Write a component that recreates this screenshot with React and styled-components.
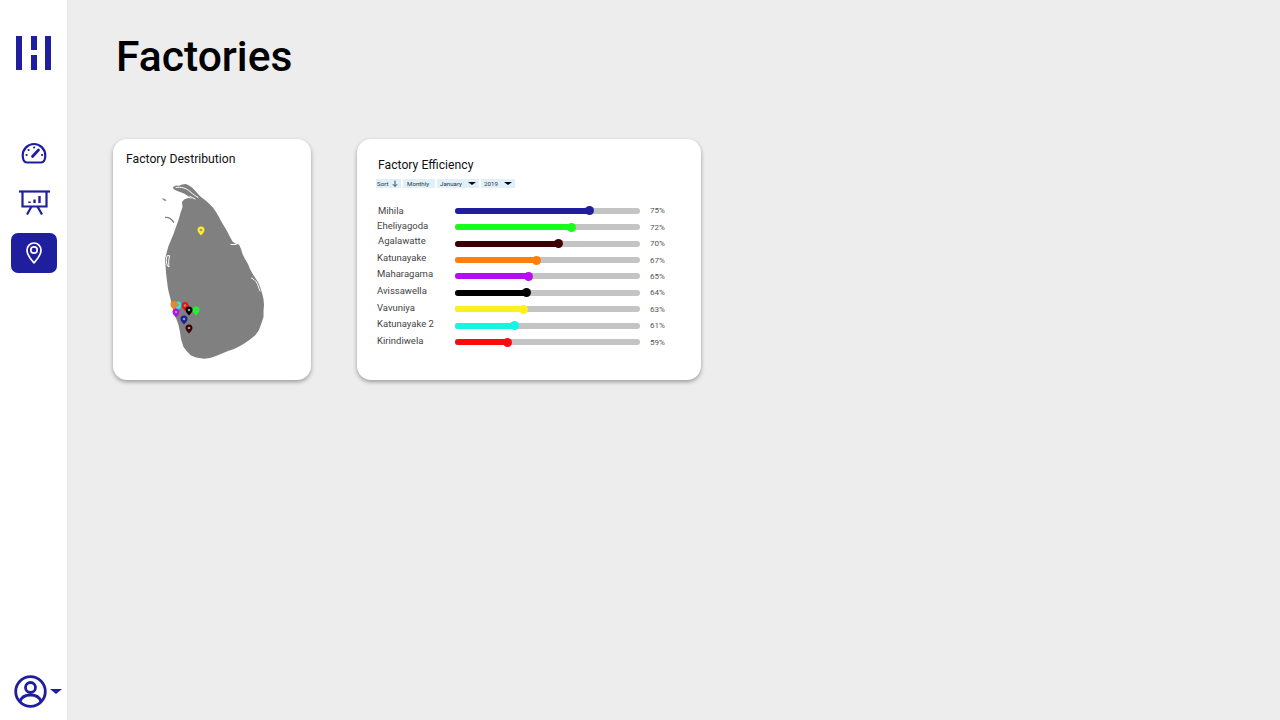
import React from "react";
import styled, { createGlobalStyle } from "styled-components";

const BLUE = "#1e1e9e";

const GlobalStyle = createGlobalStyle`
    html, body {
        margin: 0;
        height: 100%;
        background: #ededed;
        font-family: "Roboto", "Liberation Sans", sans-serif;
    }
`;

const Page = styled.div`
    display: flex;
    width: 1280px;
    height: 720px;
    overflow: hidden;
    background: #ededed;
`;

const Sidebar = styled.aside`
    width: 67px;
    height: 720px;
    flex-shrink: 0;
    display: flex;
    flex-direction: column;
    align-items: center;
    background: #fff;
    box-shadow: 1px 0 1px rgba(0, 0, 0, 0.02);
`;

const Logo = styled.div`
    width: 35px;
    height: 34px;
    margin-top: 36px;
    display: flex;
    justify-content: space-between;
`;

const LogoBar = styled.span`
    width: 6px;
    height: 100%;
    background: ${BLUE};
`;

const LogoSplitBar = styled.span`
    width: 6px;
    height: 100%;
    background: linear-gradient(${BLUE} 14px, transparent 14px, transparent 19px, ${BLUE} 19px);
`;

const Nav = styled.nav`
    margin-top: 72px;
    display: flex;
    flex-direction: column;
    align-items: center;
    width: 100%;
`;

const NavItem = styled.div`
    width: 46px;
    height: ${(p) => p.$height}px;
    margin-left: 1px;
    display: flex;
    align-items: center;
    justify-content: center;
    border-radius: 7px;
    color: ${(p) => (p.$active ? "#fff" : BLUE)};
    background: ${(p) => (p.$active ? BLUE : "transparent")};
`;

const NavGap = styled.div`
    height: ${(p) => p.$size}px;
`;

const UserMenu = styled.div`
    margin-top: auto;
    margin-bottom: 12px;
    margin-left: 9px;
    display: flex;
    align-items: center;
    gap: 3px;
    color: ${BLUE};
`;

const Caret = styled.span`
    width: 0;
    height: 0;
    border-left: ${(p) => p.$size}px solid transparent;
    border-right: ${(p) => p.$size}px solid transparent;
    border-top: ${(p) => p.$size - 1}px solid ${(p) => p.$color};
`;

const Main = styled.main`
    flex: 1;
    padding-left: 46px;
`;

const Title = styled.h1`
    margin: 33px 0 0 3px;
    height: 47px;
    font-size: 42.6px;
    line-height: 47px;
    font-weight: 500;
    color: #000;
`;

const Cards = styled.div`
    margin-top: 59px;
    display: flex;
    gap: 46px;
`;

const Card = styled.section`
    box-sizing: border-box;
    height: 241px;
    background: #fff;
    border-radius: 14px;
    box-shadow: 0 2px 4px rgba(0, 0, 0, 0.35);
`;

const MapCard = styled(Card)`
    width: 198px;
    padding: 13px 13px 0;
`;

const MapHolder = styled.div`
    margin: 14px 0 0 34px;
`;

const EfficiencyCard = styled(Card)`
    width: 344px;
    padding: 19px 21px 0;
`;

const CardTitle = styled.h2`
    margin: 0;
    font-size: 12.2px;
    line-height: 15px;
    font-weight: 400;
    color: #111;
`;

const Filters = styled.div`
    margin: 6px 0 0 -2px;
    display: flex;
    gap: 2px;
`;

const Chip = styled.div`
    box-sizing: border-box;
    width: ${(p) => p.$width}px;
    height: 9px;
    padding: 0 3px 0 ${(p) => p.$pad}px;
    display: flex;
    align-items: center;
    justify-content: space-between;
    background: #dff0fb;
    font-size: 6.2px;
    color: #333;
    white-space: nowrap;
`;

const SortArrow = styled.svg`
    width: 6px;
    height: 7px;
    color: #222;
`;

const Rows = styled.div`
    margin: 14.5px 0 0 -1px;
    display: flex;
    flex-direction: column;
`;

const Row = styled.div`
    height: 16.45px;
    display: flex;
    align-items: center;
`;

const RowLabel = styled.div`
    width: ${(p) => 78 - p.$indent}px;
    padding-left: ${(p) => p.$indent}px;
    padding-bottom: ${(p) => p.$lift}px;
    font-size: 9.5px;
    line-height: 11px;
    color: #444;
    white-space: nowrap;
`;

const Track = styled.div`
    position: relative;
    width: 185px;
    height: 6px;
    border-radius: 3px;
    background: #c4c4c4;
`;

const Fill = styled.div`
    position: relative;
    height: 100%;
    border-radius: 3px;
    background: ${(p) => p.$color};

    &::after {
        content: "";
        position: absolute;
        right: -4.500px;
        top: -1.500px;
        width: 9px;
        height: 9px;
        border-radius: 50%;
        background: ${(p) => p.$color};
    }
`;

const Percent = styled.div`
    margin-left: 10px;
    font-size: 8px;
    color: #555;
`;

const factories = [
    { name: "Mihila", value: 75, width: 134.3, color: BLUE, indent: 1, lift: 0 },
    { name: "Eheliyagoda", value: 72, width: 116.3, color: "#14ff1f", indent: 0, lift: 4 },
    { name: "Agalawatte", value: 70, width: 103.8, color: "#3c0000", indent: 1, lift: 6 },
    { name: "Katunayake", value: 67, width: 81.3, color: "#ff7f0e", indent: 0, lift: 5 },
    { name: "Maharagama", value: 65, width: 73, color: "#b50df0", indent: 0, lift: 5 },
    { name: "Avissawella", value: 64, width: 71.3, color: "#000", indent: 0, lift: 4 },
    { name: "Vavuniya", value: 63, width: 68.8, color: "#ffee22", indent: 0, lift: 4 },
    { name: "Katunayake 2", value: 61, width: 59.8, color: "#14f5e6", indent: 0, lift: 4 },
    { name: "Kirindiwela", value: 59, width: 52.3, color: "#f80d0d", indent: 0, lift: 4 },
];

const pins = [
    { x: 201, y: 230, color: "#ffee22" },
    { x: 178, y: 305, color: "#14f5e6" },
    { x: 174, y: 304.5, color: "#ff7f0e" },
    { x: 185, y: 305.5, color: "#f80d0d" },
    { x: 196, y: 310, color: "#14ff1f" },
    { x: 189, y: 310, color: "#000" },
    { x: 176, y: 312, color: "#b50df0" },
    { x: 184, y: 319, color: BLUE },
    { x: 189, y: 328, color: "#3c0000" },
];

function GaugeIcon() {
    return (
        <svg width="26" height="22" viewBox="0 0 26 22" fill="none" stroke="currentColor" strokeWidth="2.200" strokeLinecap="round">
            <path d="M6 20.500h14c1.800 0 2.800-.8 3.400-2.300.5-1.400.9-3 .9-4.700C24.300 7.200 19.200 2 13 2S1.700 7.200 1.700 13.500c0 1.700.4 3.300.9 4.700.6 1.500 1.600 2.300 3.400 2.300z" />
            <path d="M11.500 14.500l6-6.500" strokeWidth="2.800" />
            <path d="M5.500 13h.2M7.500 8h.2M13 5.500h.2M21 13h.2" strokeWidth="2" />
        </svg>
    );
}

function BoardIcon() {
    return (
        <svg width="31" height="25" viewBox="0 0 31 25" fill="none" stroke="currentColor" strokeWidth="2.200">
            <path d="M0 1.500h31" />
            <path d="M3.500 1.500v15h24v-15" />
            <path d="M12.500 16.500l-4.500 8M18.500 16.500l4.500 8" />
            <path d="M10.500 13v-1.500M15.500 13v-3.500M20.500 13V6" strokeWidth="2.400" />
        </svg>
    );
}

function PinIcon() {
    return (
        <svg width="16" height="22" viewBox="0 0 16 22" fill="none" stroke="currentColor" strokeWidth="1.700">
            <path d="M8 20.800C5.800 18.400 1 13.600 1 8.200 1 4.200 4.100 1 8 1s7 3.200 7 7.200c0 5.400-4.800 10.200-7 12.600z" />
            <circle cx="8" cy="8" r="3.200" />
        </svg>
    );
}

function UserIcon() {
    return (
        <svg width="33" height="33" viewBox="0 0 33 33" fill="none" stroke="currentColor" strokeWidth="2.800">
            <circle cx="16.500" cy="16.500" r="14.800" />
            <circle cx="16.500" cy="12.500" r="5" />
            <path d="M6 26.500c1.500-4.500 5.500-6.500 10.500-6.500s9 2 10.500 6.500" />
        </svg>
    );
}

function MapPin({ x, y, color }) {
    return (
        <g transform={`translate(${x} ${y})`}>
            <path d="M0 4.500C-1.300 3-3.500 1-3.500 -1a3.500 3.500 0 0 1 7 0c0 2-2.200 4-3.500 5.500z" fill={color} />
            <circle cx="0" cy="-1" r="1.300" fill="#999" />
        </g>
    );
}

// hand traced outline, page coordinates
function IslandMap() {
    return (
        <svg width="110" height="180" viewBox="160 180 110 180">
            <path
                fill="#808080"
                d="M173 186 L176 184.500 L179 184.800 L182 183.500 L186 183 L189 184.500 L192 186.500 L195 189.500 L198 193 L201 196 L205 199 L209 202.500 L213 206.500 L216 211 L219 216 L221 220 L224 225 L227 230 L229.500 235 L232.500 240.500 L236 243 L239 243.500 L241 248 L242.500 253 L245 258 L248 263 L250 268 L253 273.500 L256 278 L258.500 282 L260.500 287 L262 292 L263.500 298 L264 304 L263.500 310 L263.500 316 L261.500 322 L259 329 L255.500 334 L250 338.500 L245 342 L240 345 L234 348 L228 350 L222 352.500 L216 355 L210 357 L204 357.800 L196 356.500 L191 354.500 L187 350.500 L183.500 346 L181 338 L180 331 L178.500 324 L176 317 L174 310 L171.500 302 L170 296 L168 288 L167 280 L166 272 L165.500 264 L165 258 L166.500 252 L168.500 245 L171 239 L173.500 233 L176 226 L178.500 219 L180.500 212 L182.500 206 L182 201 L184 198.500 L188 197 L192 197.500 L188 195 L184 192.500 L180 191 L176 189.500 L173.500 188 Z"
            />
            <path fill="#808080" d="M162.500 197l3 1.500 1 1.500-2.500-.5-1.500-1.500z" />
            <path fill="none" stroke="#808080" strokeWidth="1.300" d="M165 216.500c3-.5 6.500 1.500 9 5" />
            <g fill="none" stroke="#fff" strokeLinecap="round">
                <path strokeWidth="1" d="M176 186.500c5-1 10 .5 14 4s5 4 8 6" />
                <path strokeWidth="1" d="M190 195.500l5 2.500" />
                <path strokeWidth="1" d="M167 255c-1 3-1 6 .5 10l1.500 1c-.5-3-.5-7 .5-11z" />
                <path strokeWidth="1.200" d="M231 243.500h5" />
                <path strokeWidth="1" d="M251.500 277c4 2 6 5 7 9 .5 1 1 3 1.500 4" />
            </g>
            {pins.map((pin) => (
                <MapPin key={pin.color} x={pin.x} y={pin.y} color={pin.color} />
            ))}
        </svg>
    );
}

export default function App() {
    return (
        <Page>
            <GlobalStyle />
            <Sidebar>
                <Logo>
                    <LogoBar />
                    <LogoSplitBar />
                    <LogoBar />
                </Logo>
                <Nav>
                    <NavItem $height={22}>
                        <GaugeIcon />
                    </NavItem>
                    <NavGap $size={26} />
                    <NavItem $height={25}>
                        <BoardIcon />
                    </NavItem>
                    <NavGap $size={18} />
                    <NavItem $height={40} $active>
                        <PinIcon />
                    </NavItem>
                </Nav>
                <UserMenu>
                    <UserIcon />
                    <Caret $size={6} $color={BLUE} />
                </UserMenu>
            </Sidebar>
            <Main>
                <Title>Factories</Title>
                <Cards>
                    <MapCard>
                        <CardTitle>Factory Destribution</CardTitle>
                        <MapHolder>
                            <IslandMap />
                        </MapHolder>
                    </MapCard>
                    <EfficiencyCard>
                        <CardTitle>Factory Efficiency</CardTitle>
                        <Filters>
                            <Chip $width={25} $pad={1}>
                                Sort
                                <SortArrow viewBox="0 0 6 7" fill="none" stroke="currentColor" strokeWidth="0.800">
                                    <path d="M3 .5v6M.8 4.200L3 6.400l2.200-2.200" />
                                </SortArrow>
                            </Chip>
                            <Chip $width={32} $pad={4}>Monthly</Chip>
                            <Chip $width={42} $pad={3}>
                                January
                                <Caret $size={4.5} $color="#000" />
                            </Chip>
                            <Chip $width={34} $pad={3}>
                                2019
                                <Caret $size={4.5} $color="#000" />
                            </Chip>
                        </Filters>
                        <Rows>
                            {factories.map((f) => (
                                <Row key={f.name}>
                                    <RowLabel $indent={f.indent} $lift={f.lift}>
                                        {f.name}
                                    </RowLabel>
                                    <Track>
                                        <Fill $color={f.color} style={{ width: f.width }} />
                                    </Track>
                                    <Percent>{f.value}%</Percent>
                                </Row>
                            ))}
                        </Rows>
                    </EfficiencyCard>
                </Cards>
            </Main>
        </Page>
    );
}
